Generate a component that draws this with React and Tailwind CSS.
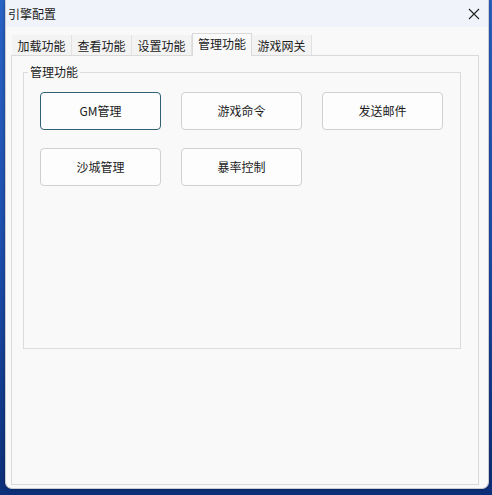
import React from 'react';

const tabs = ['加载功能', '查看功能', '设置功能', '管理功能', '游戏网关'];

const buttons = [
    { label: 'GM管理', active: true },
    { label: '游戏命令' },
    { label: '发送邮件' },
    { label: '沙城管理' },
    { label: '暴率控制' },
];

export default function App() {
    return (
        <div
            className="w-[492px] h-[495px] overflow-hidden bg-gradient-to-b from-[#2a64c8] via-[#1d4fae] to-[#0d2f7a] text-[12px] text-[#1b1b1b]"
            style={{ fontFamily: '"Noto Sans CJK SC", "Noto Sans", sans-serif' }}
        >
            <div className="ml-[5px] w-[484px] h-[489px] flex flex-col bg-[#f9f9f9] rounded-b-[7px] border border-t-0 border-[#c9ccd3] shadow-[0_0_4px_rgba(0,0,0,0.35)]">
                {/* title bar */}
                <div className="h-[27px] flex items-center justify-between pl-[2px] pr-[6px] bg-[#f0f3f9]">
                    <span className="text-[12px] leading-none">引擎配置</span>
                    <svg width="12" height="12" viewBox="0 0 12 12" className="mr-[2px]">
                        <path d="M1 1 L11 11 M11 1 L1 11" stroke="#222" strokeWidth="1.1" />
                    </svg>
                </div>

                {/* client */}
                <div className="flex-1 flex flex-col pl-[5px] pr-[9px] pt-[7px] pb-[3px]">
                    <div className="flex items-end h-[21px] pl-[1px]">
                        {tabs.map((t, i) =>
                            i === 3 ? (
                                <div
                                    key={t}
                                    className="relative z-10 -mb-px h-[23px] w-[60px] flex items-center justify-center bg-[#f9f9f9] border border-b-0 border-[#dadada] pb-[3px]"
                                >
                                    {t}
                                </div>
                            ) : (
                                <div
                                    key={t}
                                    className="h-[20px] w-[60px] flex items-center justify-center bg-[#f3f3f3] border-r border-[#e2e2e2] pt-[2px]"
                                >
                                    {t}
                                </div>
                            )
                        )}
                    </div>

                    <div className="flex-1 border border-[#dadada] bg-[#f9f9f9] pl-[11px] pr-[17px] pt-[9px]">
                        {/* group box */}
                        <fieldset className="h-[284px] border border-[#dcdcdc] m-0 p-0">
                            <legend className="ml-[4px] px-[2px] leading-[14px]">管理功能</legend>
                            <div className="grid grid-cols-[121px_121px_121px] gap-x-[20px] gap-y-[18px] pl-[16px] pt-[13px]">
                                {buttons.map((b) => (
                                    <button
                                        key={b.label}
                                        className={`h-[38px] rounded-[4px] bg-[#fdfdfd] text-[12px] ${
                                            b.active ? 'border border-[#2f6073]' : 'border border-[#d0d0d0]'
                                        }`}
                                    >
                                        {b.label}
                                    </button>
                                ))}
                            </div>
                        </fieldset>
                    </div>
                </div>
            </div>
        </div>
    );
}
